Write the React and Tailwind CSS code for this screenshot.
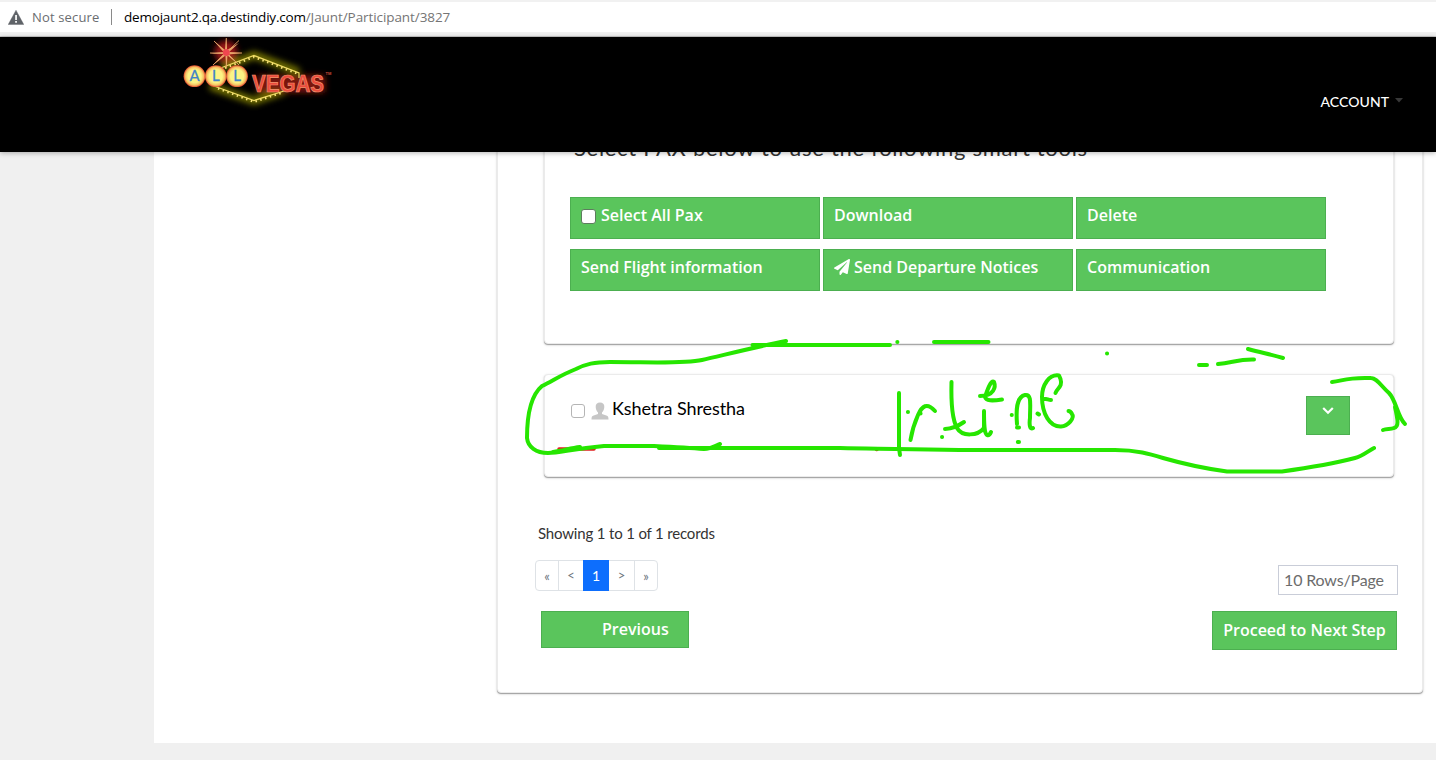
import React from "react";
import { FaPaperPlane } from "react-icons/fa";

const CARD =
  "bg-white rounded border border-[#ebebeb] shadow-[0_1px_1px_rgba(0,0,0,0.3),0_1px_3px_rgba(0,0,0,0.16)]";
const GREEN =
  "bg-[#5ac55c] border border-[#4caf50] text-white font-['Open_Sans',sans-serif] font-semibold text-base";

function BrowserBar() {
  return (
    <div className="h-[37px] shrink-0 flex flex-col bg-[#f1f1f1] border-b border-[#c8c8c8] pt-0.5">
      <div className="h-[30px] bg-white flex items-center pl-2 font-['Open_Sans',sans-serif] text-[13px]">
        <svg width="16" height="15" viewBox="0 0 16 15" className="shrink-0">
          <path d="M8 0.2 15.8 14.6H0.2Z" fill="#5f6368" stroke="#5f6368" strokeWidth="0.4" strokeLinejoin="round" />
          <path d="M7.2 5h1.7v5H7.2zM7.2 11h1.7v1.8H7.2z" fill="#fff" />
        </svg>
        <span className="ml-2 w-[68px] whitespace-nowrap text-[#6a6d70] tracking-[0.15px] pt-px">Not secure</span>
        <span className="ml-[11px] h-4 w-px bg-[#8a8a8a]" />
        <span className="ml-3 whitespace-nowrap text-black text-[13.5px] tracking-[-0.2px] pt-px">
          demojaunt2.qa.destindiy.com
          <span className="text-[#757575] tracking-[-0.08px]">/Jaunt/Participant/3827</span>
        </span>
      </div>
    </div>
  );
}

function Logo() {
  return (
    <svg width="180" height="80" viewBox="170 37 180 80" className="ml-[170px] shrink-0">
      <defs>
        <filter id="glow" x="-30%" y="-30%" width="160%" height="160%">
          <feGaussianBlur stdDeviation="3.4" />
        </filter>
        <radialGradient id="ball">
          <stop offset="0.6" stopColor="#fcf384" />
          <stop offset="0.83" stopColor="#f6c062" />
          <stop offset="1" stopColor="#e04a2e" />
        </radialGradient>
      </defs>
      <g fill="none" filter="url(#glow)">
        <path d="M222 68 254 55 299 72M210 86 254 101 284 91" stroke="#807e00" strokeWidth="7" />
        <circle cx="226" cy="52" r="11" fill="#a01818" />
        <path d="M257 84H325" stroke="#7c120e" strokeWidth="17" />
      </g>
      <path d="M222 67.500 254 55.500 299 73V78M214 86 254 100.500 284 91" fill="none" stroke="#eeda62" strokeWidth="1.200" />
      <path d="M225 68 254 57 297 73.500" fill="none" stroke="#f6e27a" strokeWidth="2.200" strokeDasharray="1.500 3.500" />
      <path d="M218 88.500 254 102 281 93" fill="none" stroke="#f6e27a" strokeWidth="2.200" strokeDasharray="1.500 3.500" />
      <path d="M226 38 227 50 239 43 229 52 242 53 229 54.500 238 64 227.500 55.500 226.500 69 225.500 55.500 213 65 223.500 54 210 53.500 223.500 52 214 41 225 50Z" fill="#e8a368" />
      <path d="M226.300 38V68M210 53H242M214 41 239 65M239 40.500 213 65" stroke="#e9a66b" strokeWidth="0.900" />
      <circle cx="226.300" cy="52.500" r="3.500" fill="#ef4650" />
      {[
        [194.5, "A"],
        [215.8, "L"],
        [237, "L"],
      ].map(([x, t]) => (
        <g key={x}>
          <circle cx={x} cy="76.200" r="10.900" fill="url(#ball)" />
          <text x={x} y="81" textAnchor="middle" fontFamily="Lato, sans-serif" fontSize="15" fill="#3f83c9" stroke="#3f83c9" strokeWidth="0.300">
            {t}
          </text>
        </g>
      ))}
      <text
        x="252"
        y="92"
        textLength="72"
        lengthAdjust="spacingAndGlyphs"
        fontFamily="Liberation Sans, Arial, sans-serif"
        fontWeight="bold"
        fontSize="23"
        fill="#ec4b3d"
        stroke="#f0956e"
        strokeWidth="0.700"
      >
        VEGAS
      </text>
      <text x="325.500" y="74.500" fontFamily="Liberation Sans, Arial, sans-serif" fontWeight="bold" fontSize="4" fill="#d04a38">
        TM
      </text>
    </svg>
  );
}

function Header() {
  return (
    <header className="h-[115px] shrink-0 bg-black flex justify-between relative z-10 shadow-[0_1px_5px_rgba(0,0,0,0.3)]">
      <Logo />
      <div className="flex items-center h-5 mt-[54px] mr-[33px] font-[Lato,sans-serif] text-white text-[14px] font-medium tracking-[0.05px]">
        ACCOUNT
        <svg width="8" height="5" viewBox="0 0 8 5" className="ml-1.5 mb-px">
          <path d="M0 0H8L4 4.500Z" fill="#383838" />
        </svg>
      </div>
    </header>
  );
}

function ToolButton({ children }) {
  return (
    <button className={`${GREEN} h-[42px] pl-2.5 pb-1.5 flex items-center text-left whitespace-nowrap`}>
      {children}
    </button>
  );
}

function ToolsCard() {
  return (
    <section className={`${CARD} h-[211px] pl-[25px]`}>
      <h2 className="-mt-px ml-1 h-[44px] leading-[32px] -translate-y-px whitespace-nowrap font-[Lato,sans-serif] text-[22px] tracking-[0.7px] text-[#333]">
        Select PAX below to use the following smart tools
      </h2>
      <div className="mt-5 grid grid-cols-[250px_250px_250px] gap-x-[3px] gap-y-2.5">
        <ToolButton>
          <span className="size-[15px] mt-[3px] mr-[5px] rounded-[3px] bg-white border border-[#5d7d5e]" />
          Select All Pax
        </ToolButton>
        <ToolButton>Download</ToolButton>
        <ToolButton>Delete</ToolButton>
        <ToolButton>Send Flight information</ToolButton>
        <ToolButton>
          <FaPaperPlane size={16} className="mr-1" />
          Send Departure Notices
        </ToolButton>
        <ToolButton>Communication</ToolButton>
      </div>
    </section>
  );
}

function PersonCard() {
  return (
    <section className={`${CARD} mt-[30px] h-[103px] pl-[26px] pr-[43px] pt-[21px] flex justify-between`}>
      <div className="flex items-center h-[26px]">
        <span className="size-3.5 mt-1 rounded-[3px] bg-white border border-[#b5b5b5]" />
        <svg width="18" height="18" viewBox="0 0 18 18" className="ml-1.5 mt-[3px]">
          <path
            d="M9 0.500C6.200 0.500 4.500 2.200 4.700 5C4.800 7.500 5.800 9.500 7 10.500V12L2 13.700C0.800 14.200 0.500 15.500 0.500 17.500H17.500C17.500 15.500 17.200 14.200 16 13.700L11 12V10.500C12.200 9.500 13.200 7.500 13.300 5C13.500 2.200 11.800 0.500 9 0.500Z"
            fill="#c6c6c6"
          />
        </svg>
        <span className="ml-[3px] -mt-0.5 whitespace-nowrap font-[Lato,sans-serif] text-[18px] tracking-[-0.08px] text-black">
          Kshetra Shrestha
        </span>
      </div>
      <button className={`${GREEN} w-11 h-[39px] flex justify-center pt-[9px]`}>
        <svg width="12" height="10" viewBox="0 0 12 10">
          <path d="M1.200 2 6 6.700 10.800 2" fill="none" stroke="#fff" strokeWidth="2.200" />
        </svg>
      </button>
    </section>
  );
}

function Pagination() {
  const cell = "flex items-center justify-center border-r border-[#dee2e6] text-[13px] text-[#6c757d]";
  return (
    <nav className="flex h-[31px] w-[123px] rounded border border-[#dee2e6] font-[Lato,sans-serif]">
      <span className={`${cell} w-[23px] pt-0.5`}>«</span>
      <span className={`${cell} w-[25px]`}>&lt;</span>
      <span className="flex items-center justify-center w-[26px] -my-px -ml-px bg-[#0d6efd] text-[14px] text-white">
        1
      </span>
      <span className={`${cell} w-[26px]`}>&gt;</span>
      <span className="flex items-center justify-center flex-1 pt-0.5 text-[13px] text-[#6c757d]">»</span>
    </nav>
  );
}

function ListFooter() {
  return (
    <div className="-ml-[9px] -mr-1 font-[Lato,sans-serif]">
      <p className="mt-[46px] ml-[3px] h-5 leading-5 text-[15px] tracking-[-0.17px] text-[#333] whitespace-nowrap">
        Showing 1 to 1 of 1 records
      </p>
      <div className="mt-[17px] flex justify-between items-start">
        <Pagination />
        <div className="mt-[5px] w-[120px] h-[30px] border border-[#c9cdd8] pl-[5px] flex items-center text-[16px] tracking-[-0.15px] text-[#6c6c6c] whitespace-nowrap">
          10 Rows/Page
        </div>
      </div>
      <div className="mt-4 pl-1.5 pr-px flex justify-between items-start">
        <button className={`${GREEN} w-[148px] h-[37px] pl-[60px] pb-0.5 text-left`}>Previous</button>
        <button className={`${GREEN} w-[185px] h-[39px] pb-0.5 whitespace-nowrap`}>Proceed to Next Step</button>
      </div>
    </div>
  );
}

/* Freehand marker strokes drawn over the page */
function Ink() {
  return (
    <svg className="absolute inset-0 z-20 pointer-events-none" width="1436" height="760" viewBox="0 0 1436 760" fill="none" strokeLinecap="round" strokeLinejoin="round">
      <path d="M559 449H594M876.500 449.500H877" stroke="#e02020" strokeWidth="3.500" />
      <g stroke="#26e600" strokeWidth="4">
        <path d="M786 341C755 347 724 355 702 360C684 364 650 362 610 362C594 362 586 364 576 369C563 374 554 380 542 386C530 396 527 418 527 438C528 447 536 453 548 453C560 453 571 449 604 446H654C676 447 693 448 704 449C712 449 716 445 720 444" />
        <path d="M553 452C563 451 570 448 580 447" />
        <path d="M659 448H840C900 449 935 450 1000 450H1115C1137 450 1150 454 1163 458C1184 464 1208 469 1227 471.500H1282C1307 468 1332 464 1355 458C1363 456 1368 451 1374 448" />
        <path d="M752.500 345H890M934 342H988.500M1199 365H1207M1218 364C1232 363 1238 359 1254 359.500M1248 349C1262 353 1270 354 1283 358" />
        <path d="M897.300 342H897.400M1107 353.500H1107.100" />
        <path d="M1332 382C1343 381 1346 377 1371 378C1377 378 1381 386 1389 393C1396 400 1398 418 1405 424M1395 407C1398 420 1399 427 1394 428C1390 429.500 1387 428.500 1383 430" />
        <path d="M899 393V448L900 455M910.500 440C912 431 914 424 918 415C922 406 927 402 935 411" />
        <path d="M951.500 382C951 400 952 419 957 428C962 437 978 436 984 428L984 411C984 424 984 433 987 435C989 436 990 434 991 432M945 429C953 429 958 426 964 422" />
        <path d="M980 396C994 396 996 387 994 382C991 379 987 391 985 397C986 401 992 401 1002 399.500" />
        <path d="M1017 424C1016 411 1016 397 1025 395C1032 394 1030 404 1030 418C1029 425 1030 430 1033 428" />
        <path d="M1055.500 393C1057 388 1063 387 1060.500 379L1059 375.500C1049 374 1042 385 1042 397C1042 414 1050 427 1061 426.500C1068 426 1075 418 1072 414C1071 412 1069 411 1068.500 411M1042 399C1046 398 1048 400 1051 400" />
        <path d="M907.900 412H908M920.500 413.500H920.600M942 437H942.100M1011.700 415H1011.800M1017 427.500H1019M1017.800 442H1019M1037.500 413.500L1039 414.500" />
      </g>
    </svg>
  );
}

export default function App() {
  return (
    <div className="relative flex flex-col w-[1436px] h-[760px] overflow-hidden bg-[#f0f0f0]">
      <BrowserBar />
      <Header />
      <main className="ml-[154px] h-[591px] shrink-0 bg-white overflow-hidden pl-[343px] pr-[13px]">
        <div className={`${CARD} -mt-5 h-[561px] pl-[46px] pr-7`}>
          <ToolsCard />
          <PersonCard />
          <ListFooter />
        </div>
      </main>
      <Ink />
    </div>
  );
}
